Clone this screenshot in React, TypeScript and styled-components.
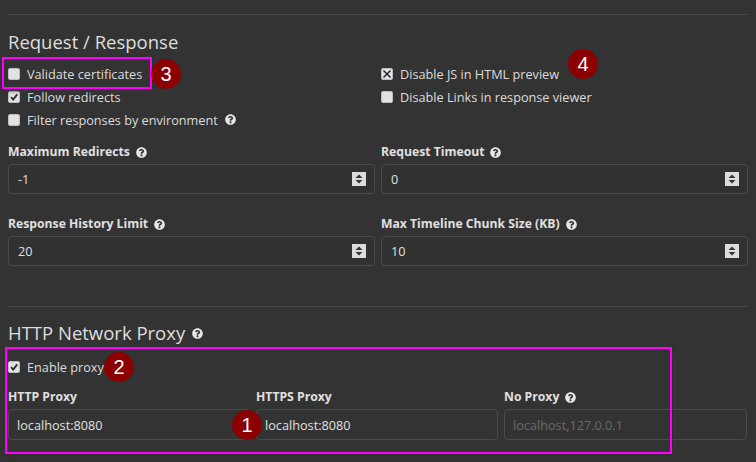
import React from 'react'
import styled, { createGlobalStyle } from 'styled-components'
import { FaQuestionCircle } from 'react-icons/fa'

const GlobalStyle = createGlobalStyle`
  html, body {
    margin: 0;
    padding: 0;
    background: #333333;
  }
  body {
    font-family: 'Open Sans', 'Noto Sans', sans-serif;
    color: #dcdcdc;
  }
  * { box-sizing: border-box; }
`

type CheckState = 'off' | 'on' | 'x'

const Check: React.FC<{ state: CheckState }> = ({ state }) => (
  <CheckBox>
    {state === 'on' && (
      <svg width="10" height="10" viewBox="0 0 10 10">
        <path d="M2 5.2 L4.2 7.6 L8.2 2.4" fill="none" stroke="#2a2a2a" strokeWidth="1.8" />
      </svg>
    )}
    {state === 'x' && (
      <svg width="10" height="10" viewBox="0 0 10 10">
        <path d="M1.5 1.5 L8.5 8.5 M8.5 1.5 L1.5 8.5" fill="none" stroke="#1a1a2a" strokeWidth="1.4" />
      </svg>
    )}
  </CheckBox>
)

const Help = () => (
  <HelpIcon>
    <FaQuestionCircle />
  </HelpIcon>
)

const Spinner = () => (
  <SpinBox>
    <svg width="8" height="10" viewBox="0 0 8 10">
      <path d="M4 0.5 L7.5 4 L0.5 4 Z M0.5 6 L7.5 6 L4 9.5 Z" fill="#333" />
    </svg>
  </SpinBox>
)

const App: React.FC = () => {
  return (
    <>
      <GlobalStyle />
      <Page>
        <Rule />
        <Heading>Request / Response</Heading>
        <Columns>
          <CheckList>
            <CheckRow>
              <Check state="off" />
              Validate certificates
              <Highlight $top={-5} $left={-6} $width={150} $height={32} />
              <Badge $x={158} $y={0}>3</Badge>
            </CheckRow>
            <CheckRow>
              <Check state="on" />
              Follow redirects
            </CheckRow>
            <CheckRow>
              <Check state="off" />
              Filter responses by environment
              <Help />
            </CheckRow>
          </CheckList>
          <CheckList>
            <CheckRow>
              <Check state="x" />
              Disable JS in HTML preview
              <Badge $x={202} $y={-10}>4</Badge>
            </CheckRow>
            <CheckRow>
              <Check state="off" />
              Disable Links in response viewer
            </CheckRow>
          </CheckList>
        </Columns>
        <FieldGrid>
          <Field>
            <FieldLabel>
              Maximum Redirects <Help />
            </FieldLabel>
            <NumberInput>
              <span>-1</span>
              <Spinner />
            </NumberInput>
          </Field>
          <Field>
            <FieldLabel>
              Request Timeout <Help />
            </FieldLabel>
            <NumberInput>
              <span>0</span>
              <Spinner />
            </NumberInput>
          </Field>
          <Field>
            <FieldLabel>
              Response History Limit <Help />
            </FieldLabel>
            <NumberInput>
              <span>20</span>
              <Spinner />
            </NumberInput>
          </Field>
          <Field>
            <FieldLabel>
              Max Timeline Chunk Size (KB) <Help />
            </FieldLabel>
            <NumberInput>
              <span>10</span>
              <Spinner />
            </NumberInput>
          </Field>
        </FieldGrid>
        <Rule $top={40} />
        <Heading $top={15}>
          HTTP Network Proxy <Help />
        </Heading>
        <ProxyBlock>
          <Highlight $top={0} $left={-3} $width={667} $height={107} />
          <CheckRow>
            <Check state="on" />
            Enable proxy
            <Badge $x={111} $y={0}>2</Badge>
          </CheckRow>
          <ProxyGrid>
            <Field>
              <FieldLabel>HTTP Proxy</FieldLabel>
              <TextInput>localhost:8080</TextInput>
            </Field>
            <Field>
              <FieldLabel>HTTPS Proxy</FieldLabel>
              <TextInput>
                localhost:8080
                <Badge $x={-10} $y={0}>1</Badge>
              </TextInput>
            </Field>
            <Field>
              <FieldLabel>
                No Proxy <Help />
              </FieldLabel>
              <TextInput $placeholder>localhost,127.0.0.1</TextInput>
            </Field>
          </ProxyGrid>
        </ProxyBlock>
      </Page>
    </>
  )
}

export default App

const Page = styled.div`
  width: 756px;
  height: 462px;
  overflow: hidden;
  padding: 14px 8px 0;
  font-size: 12.7px;
`

const Rule = styled.div<{ $top?: number }>`
  height: 1px;
  background: #464646;
  margin-top: ${(p) => p.$top ?? 0}px;
`

const Heading = styled.h2<{ $top?: number }>`
  margin: ${(p) => p.$top ?? 16}px 0 0;
  font-size: 18.5px;
  font-weight: 400;
  line-height: 22px;
  color: #dedede;
  display: flex;
  align-items: center;
  gap: 7px;
`

const Columns = styled.div`
  display: grid;
  grid-template-columns: 367px 367px;
  column-gap: 6px;
  margin-top: 9px;
`

const CheckList = styled.div`
  display: flex;
  flex-direction: column;
`

const CheckRow = styled.div`
  position: relative;
  display: flex;
  align-items: center;
  gap: 7px;
  height: 23px;
  white-space: nowrap;
`

const CheckBox = styled.span`
  width: 12px;
  height: 12px;
  flex: none;
  border-radius: 2px;
  background: #e2e2e2;
  border: 1px solid #bdbdbd;
  display: flex;
  align-items: center;
  justify-content: center;
`

const HelpIcon = styled.span`
  display: inline-flex;
  font-size: 11px;
  color: #e6e6e6;
`

const Highlight = styled.span<{ $top: number; $left: number; $width: number; $height: number }>`
  position: absolute;
  top: ${(p) => p.$top}px;
  left: ${(p) => p.$left}px;
  width: ${(p) => p.$width}px;
  height: ${(p) => p.$height}px;
  border: 2px solid #ff00ff;
  box-shadow: 2px 2px 4px rgba(0, 0, 0, 0.35), 3px 3px 3px rgba(120, 120, 120, 0.25);
  pointer-events: none;
  z-index: 2;
`

const Badge = styled.span<{ $x: number; $y: number }>`
  position: absolute;
  left: ${(p) => p.$x}px;
  top: 50%;
  margin-top: ${(p) => p.$y - 15}px;
  margin-left: -15px;
  width: 30px;
  height: 30px;
  border-radius: 50%;
  background: #8b0000;
  color: #fff;
  font-family: 'Liberation Sans', Arial, sans-serif;
  font-size: 20px;
  line-height: 30px;
  text-align: center;
  z-index: 3;
`

const FieldGrid = styled.div`
  display: grid;
  grid-template-columns: 367px 367px;
  column-gap: 6px;
  row-gap: 22px;
  margin-top: 13px;
`

const Field = styled.div`
  display: flex;
  flex-direction: column;
  gap: 4px;
`

const FieldLabel = styled.div`
  font-weight: 700;
  font-size: 12.2px;
  line-height: 16px;
  display: flex;
  align-items: center;
  gap: 6px;
  color: #e0e0e0;
`

const NumberInput = styled.div`
  height: 30px;
  border: 1px solid #4a4a4a;
  border-radius: 4px;
  background: #313131;
  display: flex;
  align-items: center;
  justify-content: space-between;
  padding: 0 8px 0 9px;
  color: #e0e0e0;
`

const SpinBox = styled.span`
  width: 14px;
  height: 14px;
  background: #dcdcdc;
  display: flex;
  align-items: center;
  justify-content: center;
`

const ProxyBlock = styled.div`
  position: relative;
  margin-top: 3px;
  padding-top: 8px;
`

const ProxyGrid = styled.div`
  display: grid;
  grid-template-columns: 242px 242px 243px;
  column-gap: 6px;
  margin-top: 11px;
`

const TextInput = styled.div<{ $placeholder?: boolean }>`
  position: relative;
  height: 31px;
  border: 1px solid #4a4a4a;
  border-radius: 4px;
  display: flex;
  align-items: center;
  padding: 0 8px;
  color: ${(p) => (p.$placeholder ? '#6a6a6a' : '#e0e0e0')};
`
